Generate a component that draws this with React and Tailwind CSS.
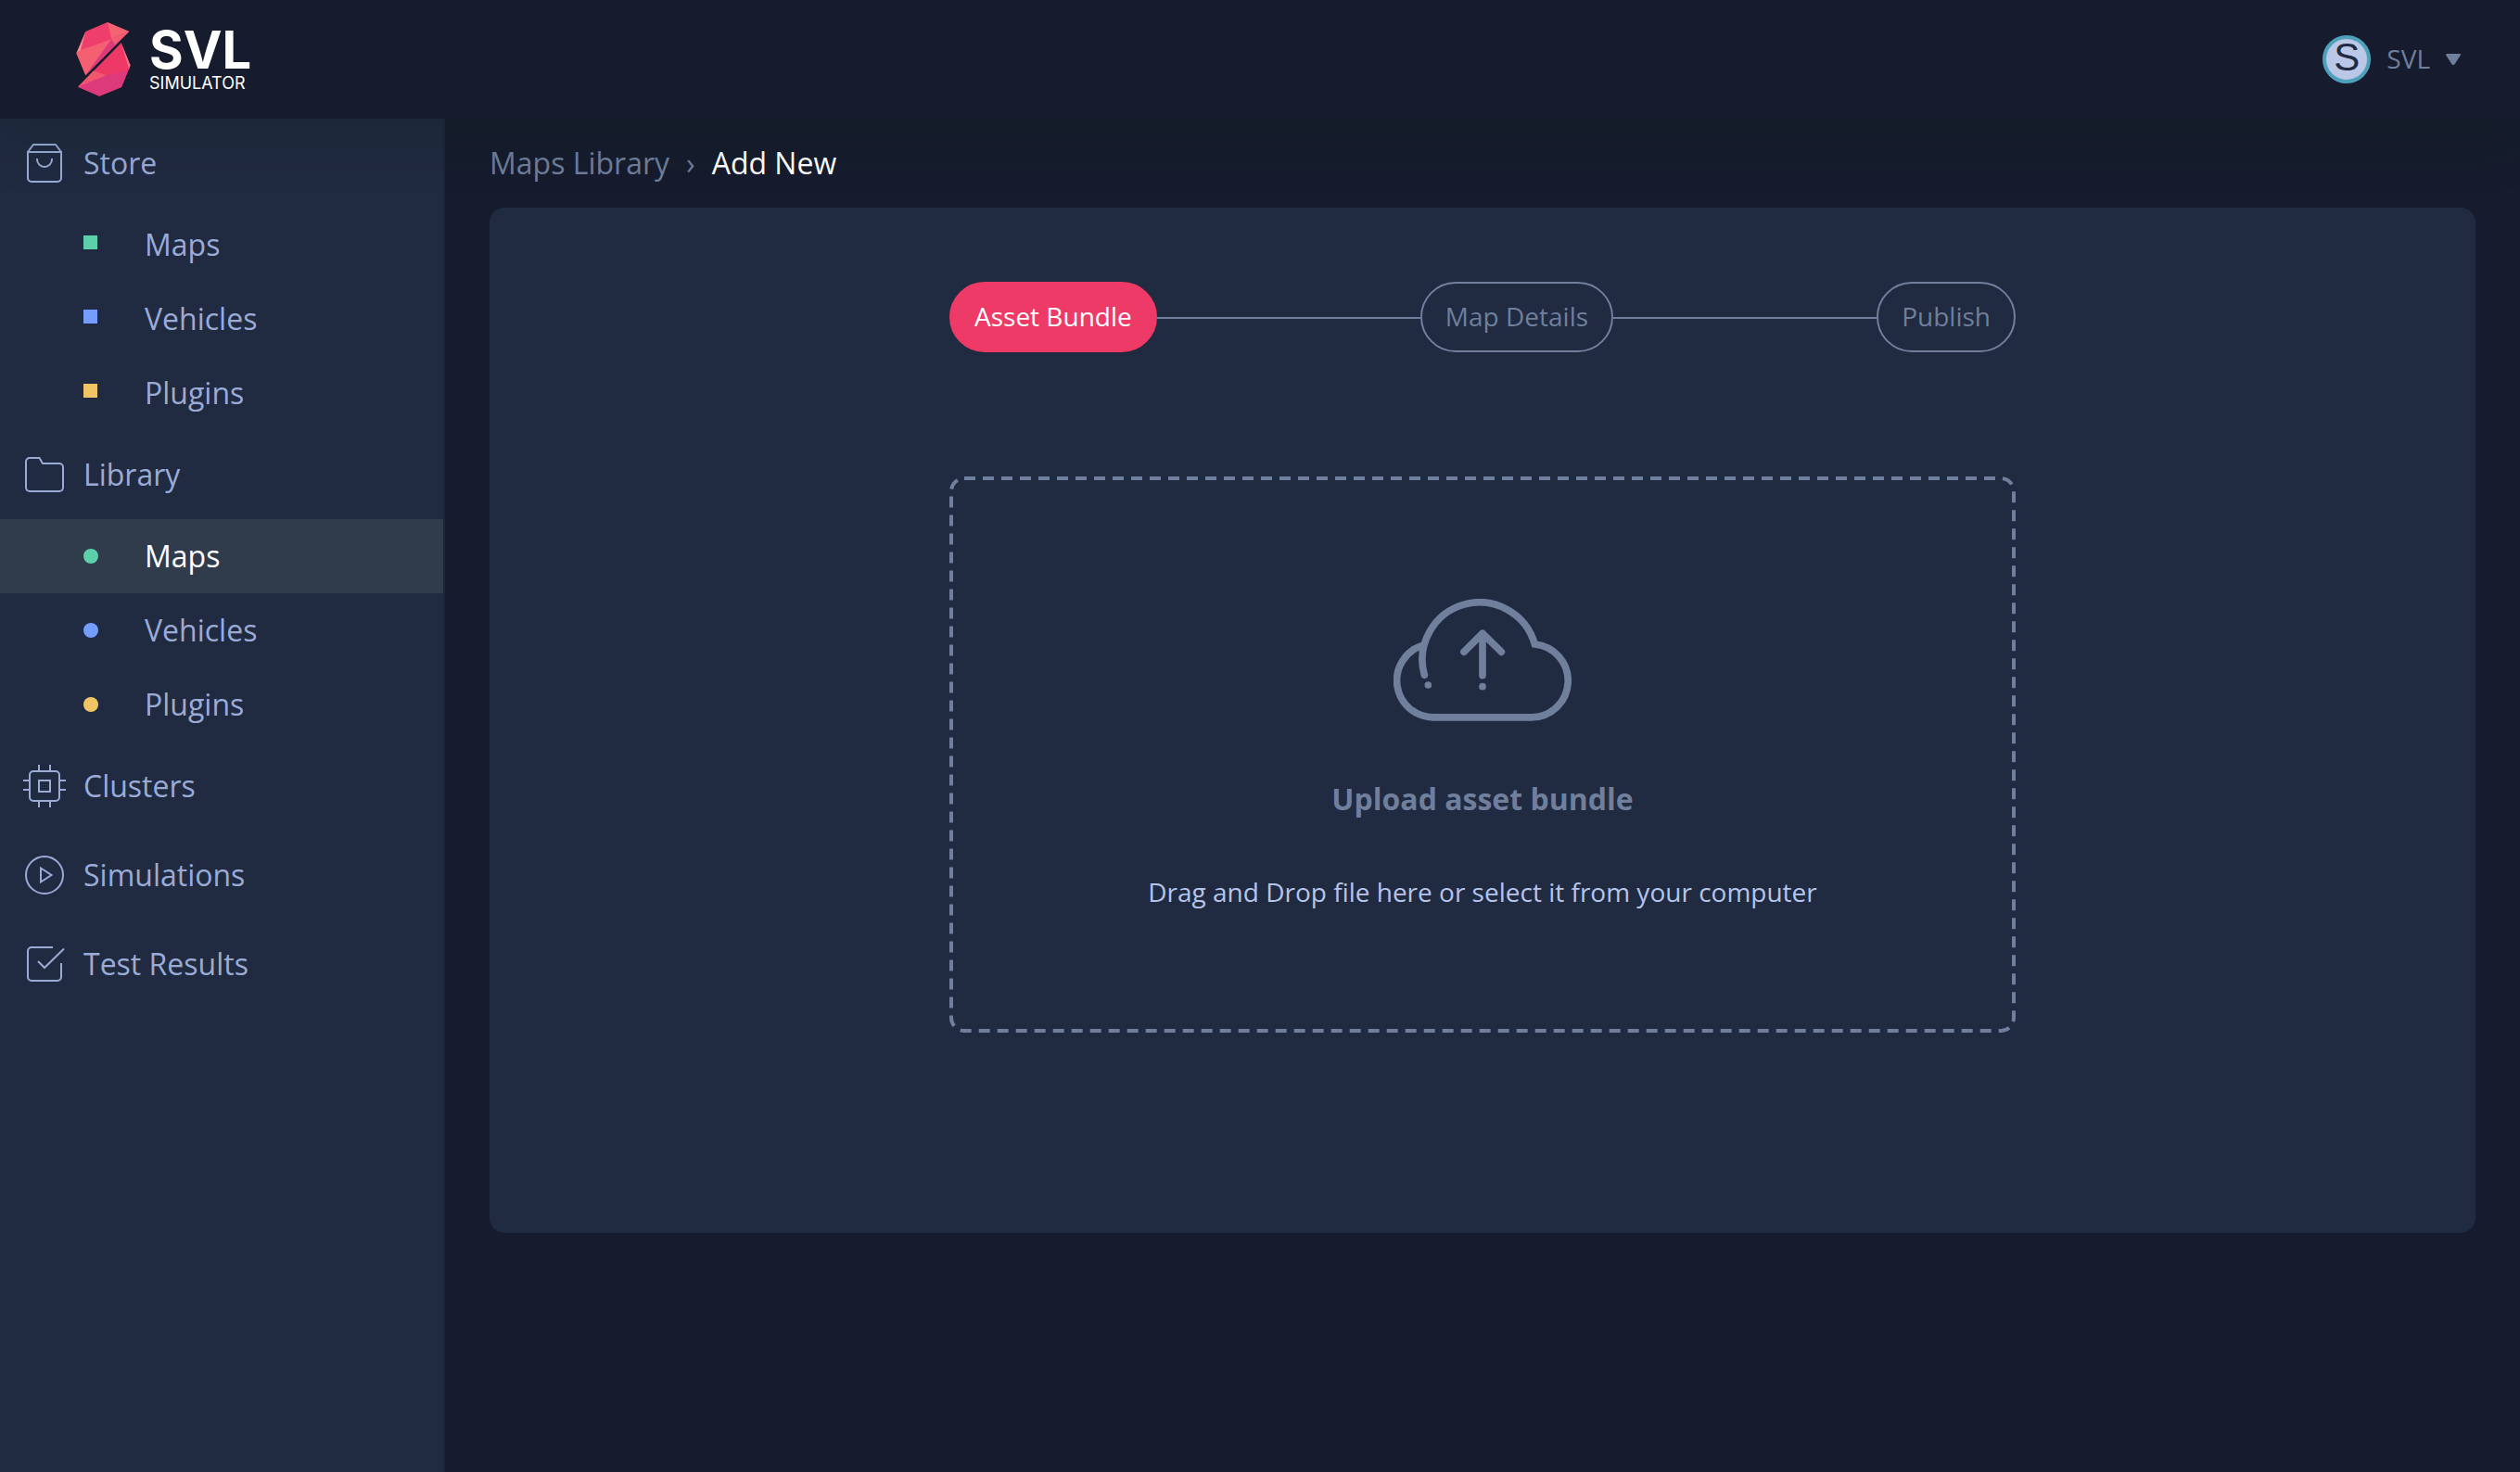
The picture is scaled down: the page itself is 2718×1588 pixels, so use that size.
const ASSETS = [
  { label: "Maps", color: "bg-[#5ecfab]" },
  { label: "Vehicles", color: "bg-[#759cff]" },
  { label: "Plugins", color: "bg-[#f1c566]" },
];

function Icon({ children }) {
  return (
    <svg viewBox="0 0 48 48" className="size-12 shrink-0" fill="none" stroke="currentColor" strokeWidth="2" aria-hidden="true">
      {children}
    </svg>
  );
}

function BagIcon() {
  return (
    <Icon>
      <path d="M6 12 12 4H36L42 12" />
      <path d="M6 12H42V40a4 4 0 0 1-4 4H10a4 4 0 0 1-4-4Z" />
      <path d="M16 19v1a8 8 0 0 0 16 0v-1" />
    </Icon>
  );
}

function FolderIcon() {
  return (
    <Icon>
      <path d="M8 6H18.500L22 12H40a4 4 0 0 1 4 4V38a4 4 0 0 1-4 4H8a4 4 0 0 1-4-4V10a4 4 0 0 1 4-4Z" />
    </Icon>
  );
}

function ChipIcon() {
  return (
    <Icon>
      <rect x="8" y="8" width="32" height="32" rx="4" />
      <rect x="18" y="18" width="12" height="12" />
      <path d="M18 1v7M30 1v7M18 40v7M30 40v7M1 18h7M1 28h7M40 18h7M40 28h7" />
    </Icon>
  );
}

function PlayIcon() {
  return (
    <Icon>
      <circle cx="24" cy="24" r="20" />
      <path d="M20 16.500 31.500 24 20 31.500Z" />
    </Icon>
  );
}

function CheckIcon() {
  return (
    <Icon>
      <path d="M33 6H10a4 4 0 0 0-4 4V38a4 4 0 0 0 4 4H38a4 4 0 0 0 4-4V23" />
      <path d="M17 21 24 28 45 7.500" />
    </Icon>
  );
}

function NavItem({ icon, label }) {
  return (
    <a href="#" className="flex h-24 items-center gap-[18px] pl-6">
      {icon}
      {label}
    </a>
  );
}

function SubNav({ round, active }) {
  return (
    <ul>
      {ASSETS.map(({ label, color }) => (
        <li key={label}>
          <a
            href="#"
            className={`flex h-20 items-center pl-[90px] ${label === active ? "bg-[#303b4c] text-white" : ""}`}
          >
            <span className="flex w-[66px] shrink-0">
              <span className={`${color} ${round ? "size-4 rounded-full" : "mb-1.5 size-[15px]"}`} />
            </span>
            {label}
          </a>
        </li>
      ))}
    </ul>
  );
}

function Logo() {
  return (
    <a href="#" className="flex items-center gap-5 text-white" aria-label="SVL Simulator">
      <svg viewBox="65 71 176 242" className="h-20 w-[59px]" aria-hidden="true">
        <path fill="#ee3f6c" d="M166 71 237 101 95 244 65 172 95 101Z" />
        <path fill="#f36370" d="M166 71 237 101 180 126Z" />
        <path fill="#f26071" d="M79 162 180 126 95 244 65 172Z" />
        <path fill="#f68a8c" d="M95 101 65 172 79 162Z" />
        <path fill="#dd3a7b" d="M180 126 237 101 95 244Z" />
        <path fill="#f05f70" d="M180 126 237 101 190 144Z" />
        <path fill="#ee3866" d="M211 138 241 212 212 283 140 312 70 282Z" />
        <path fill="#dd3a7b" d="M163 244 236 228 241 212 212 283 140 312 70 282Z" />
        <path fill="#f0566e" d="M120 230 163 244 70 282Z" />
        <path fill="#f2708c" d="M211 138 241 212 236 222Z" />
      </svg>
      <span className="flex flex-col items-start gap-1 font-['Inter',sans-serif]">
        <span className="text-[56px] leading-12 font-bold">SVL</span>
        <span className="text-[18px] leading-4">SIMULATOR</span>
      </span>
    </a>
  );
}

function CloudUpload() {
  return (
    <svg
      viewBox="126 78 576 396"
      className="h-[132px] w-48"
      fill="none"
      stroke="currentColor"
      strokeWidth="23"
      strokeLinecap="round"
      aria-hidden="true"
    >
      <path d="M220 229A119 119 0 0 0 256 461.500H571A118.500 118.500 0 0 0 583 225A185 185 0 1 0 226 325" />
      <path d="M414 326V190M354 250 414 190 475 250" strokeLinejoin="round" />
      <g fill="currentColor" stroke="none">
        <circle cx="238" cy="357" r="11.500" />
        <circle cx="414" cy="362" r="11.500" />
      </g>
    </svg>
  );
}

function Step({ label, active }) {
  return (
    <button
      type="button"
      className={`h-[76px] rounded-full border-2 px-[25px] pb-0.5 ${
        active ? "border-[#ee3a66] bg-[#ee3a66] text-white" : "border-[#6f7f9c] text-[#6f7f9c]"
      }`}
    >
      {label}
    </button>
  );
}

function Connector() {
  return <span className="mt-0.5 h-0.5 flex-1 bg-[#6f7f9c]" />;
}

export default function App() {
  return (
    <div className="flex min-h-screen flex-col bg-[#161c2d] font-['Open_Sans',sans-serif] text-[32px] leading-10 text-[#9aacd6]">
      <header className="relative flex h-32 items-center justify-between bg-[#161c2d] pr-16 pl-[82px] shadow-[0_20px_60px_rgba(15,34,25,0.22)]">
        <Logo />
        <button type="button" className="flex items-center gap-[17px] text-[28px] text-[#6f7f9c]">
          <span className="flex size-[52px] items-center justify-center rounded-full border-4 border-[#4fa0bb] bg-[#bac7e6] pb-1 font-['Liberation_Sans',sans-serif] text-[42px] text-[#202a41]">
            S
          </span>
          <span className="pb-0.5">SVL</span>
          <svg viewBox="0 0 16 12" className="h-3 w-4" aria-hidden="true">
            <path fill="currentColor" stroke="currentColor" strokeWidth="2" strokeLinejoin="round" d="M1 1H15L8.500 11H7.500Z" />
          </svg>
        </button>
      </header>

      <div className="flex flex-1">
        <nav className="w-[480px] shrink-0 border-r-2 border-[#1d2638] bg-[#202a41]">
          <NavItem icon={<BagIcon />} label="Store" />
          <SubNav />
          <NavItem icon={<FolderIcon />} label="Library" />
          <SubNav round active="Maps" />
          <NavItem icon={<ChipIcon />} label="Clusters" />
          <NavItem icon={<PlayIcon />} label="Simulations" />
          <NavItem icon={<CheckIcon />} label="Test Results" />
        </nav>

        <main className="flex-1 px-12">
          <div className="flex h-24 items-center gap-[18px] text-[#6f7f9c]">
            <a href="#">Maps Library</a>
            <span>›</span>
            <h1 className="text-white">Add New</h1>
          </div>

          <section className="rounded-2xl bg-[#202a41] px-12 pt-20 pb-[216px]">
            <div className="mx-auto max-w-[1150px]">
              <div className="flex items-center text-[28px]">
                <Step label="Asset Bundle" active />
                <Connector />
                <Step label="Map Details" />
                <Connector />
                <Step label="Publish" />
              </div>

              <button type="button" className="relative mt-[134px] flex h-[600px] w-full flex-col items-center pt-[132px]">
                <svg className="absolute inset-0 size-full overflow-visible text-[#6f7f9c]" aria-hidden="true">
                  <rect
                    x="2"
                    y="2"
                    rx="14"
                    className="h-[calc(100%-4px)] w-[calc(100%-4px)]"
                    fill="none"
                    stroke="currentColor"
                    strokeWidth="4"
                    strokeDasharray="12 8"
                  />
                </svg>
                <span className="text-[#6f7f9c]">
                  <CloudUpload />
                </span>
                <span className="mt-16 font-bold text-[#6f7f9c]">Upload asset bundle</span>
                <span className="mt-[60px] text-[28px] text-[#b5c5ea]">
                  Drag and Drop file here or select it from your computer
                </span>
              </button>
            </div>
          </section>
        </main>
      </div>
    </div>
  );
}
